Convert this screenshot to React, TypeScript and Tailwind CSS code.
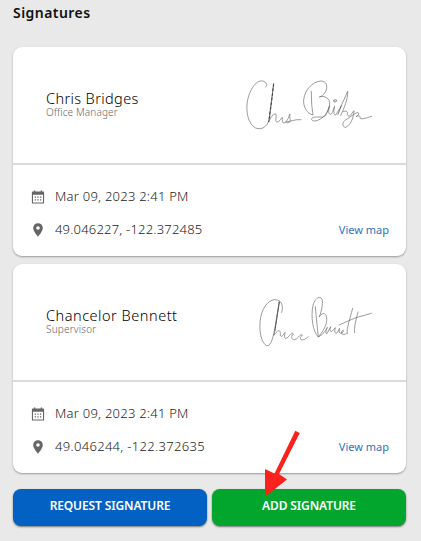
import type { ReactNode } from "react";

type Signature = {
  name: string;
  nameClass: string;
  role: string;
  roleClass: string;
  date: string;
  location: string;
  locationClass: string;
  drawing: ReactNode;
};

const signatures: Signature[] = [
  {
    name: "Chris Bridges",
    nameClass: "tracking-[0.38px]",
    role: "Office Manager",
    roleClass: "tracking-[0.13px]",
    date: "Mar 09, 2023 2:41 PM",
    location: "49.046227, -122.372485",
    locationClass: "tracking-[0.2px]",
    drawing: (
      <svg className="h-[116px] w-[140px]" viewBox="30 -39 420 348" fill="none" stroke="#6a6a6a" strokeWidth="2" strokeLinecap="round" strokeLinejoin="round">
        <path d="M107 81C114 77 110 66 98 63C77 59 55 95 51 132C48 171 62 203 84 206C103 208 115 193 119 174L131 71L116 186C121 174 131 159 137 162C141 166 134 184 140 186C148 187 153 176 157 172C157 180 156 189 162 189C170 187 175 174 180 162C177 173 183 178 180 185C176 190 169 189 167 186C181 185 195 177 213 179" />
        <path d="M131 71L125 122L116 186" stroke="#333" strokeWidth="2.5" strokeDasharray="9 5" strokeLinecap="butt" />
        <path d="M244 94L245 133L249 165C231 161 219 140 221 119C225 88 248 65 273 63C290 63 294 80 287 94C282 104 273 111 268 111C283 105 301 116 299 132C298 155 277 181 254 183C243 183 242 175 250 172C267 168 285 178 290 160L299 137C295 151 295 163 301 163C308 162 309 149 314 139C311 152 310 164 317 165L332 141L353 94C354 116 343 143 332 167M340 155C347 151 354 154 352 161C352 171 360 170 364 162L372 152C371 176 359 199 346 202C335 201 337 185 348 179C362 171 371 161 381 158C390 157 386 166 378 170C386 165 391 167 390 173C391 180 406 175 425 169" />
        <path d="M311 122C315 117 323 119 319 124C316 127 310 126 311 122M334 137L324 163" stroke="#444" />
      </svg>
    ),
  },
  {
    name: "Chancelor Bennett",
    nameClass: "tracking-[0.52px]",
    role: "Supervisor",
    roleClass: "tracking-[0.2px]",
    date: "Mar 09, 2023 2:41 PM",
    location: "49.046244, -122.372635",
    locationClass: "tracking-[0.31px]",
    drawing: (
      <svg className="h-[116px] w-[140px]" viewBox="30 -48 420 348" fill="none" stroke="#6a6a6a" strokeWidth="2" strokeLinecap="round" strokeLinejoin="round">
        <path d="M155 97C160 83 157 65 143 60C121 54 99 76 92 112C85 151 94 190 110 197C124 199 130 169 136 137L148 65L132 166C137 157 147 148 150 154C152 161 149 170 155 169C159 168 162 160 165 157C163 168 163 176 168 175C176 173 179 162 187 160C192 160 190 165 187 165C182 171 187 181 194 179C203 177 208 166 213 164C220 164 216 168 211 172C209 184 224 181 235 170" />
        <path d="M148 65L143 98L135 152" stroke="#444" strokeWidth="2" strokeDasharray="9 3" />
        <path d="M256 80L260 123L265 171C248 155 242 109 249 76C254 57 268 45 276 57C280 73 273 97 268 111C274 97 288 97 290 113C293 135 276 158 265 171C278 164 287 154 292 142C287 154 286 162 291 161L302 140C298 153 301 157 307 153L316 143C313 155 314 162 321 159L329 145C325 156 329 164 338 157C343 150 339 148 335 155C332 168 346 162 353 160C347 158 358 121 368 85M384 96C379 117 371 142 374 158M327 135L375 114L424 100" />
      </svg>
    ),
  },
];

function CalendarIcon() {
  return (
    <svg className="h-4 w-4 shrink-0" viewBox="-0.5 0 16 16" fill="#666">
      <path fillRule="evenodd" d="M3.400 1.400h1.400v1.200h5.400V1.400h1.400v1.200h1c.6 0 1 .4 1 1v10.100c0 .5-.4.900-.9.900H2.300c-.5 0-.9-.4-.9-.9V3.600c0-.6.4-1 1-1h1V1.400ZM2.500 5.700v7.800h10V5.700h-10Z" />
      <path d="M4.200 7.600h1.300v1.200H4.200zm2.600 0h1.300v1.200H6.800zm2.700 0h1.300v1.200H9.500zM4.200 10.300h1.300v1.200H4.200zm2.600 0h1.300v1.200H6.800zm2.700 0h1.300v1.200H9.500z" />
    </svg>
  );
}

function PinIcon() {
  return (
    <svg className="h-4 w-4 shrink-0" viewBox="0 0 16 16" fill="#666">
      <path fillRule="evenodd" d="M8 1.200A4.800 4.800 0 0 0 3.200 6c0 3.500 4.800 8.700 4.800 8.700S12.800 9.500 12.800 6A4.800 4.800 0 0 0 8 1.200Zm0 3a1.800 1.800 0 1 1 0 3.600 1.800 1.800 0 0 1 0-3.600Z" />
    </svg>
  );
}

function SignatureCard({ item }: { item: Signature }) {
  return (
    <section className="h-[208.5px] rounded-[9px] bg-white shadow-[0_1px_2px_rgba(0,0,0,0.35)]">
      <div className="flex h-[116px] justify-between pr-[26px] pl-[33px]">
        <div className="pt-[42px] whitespace-nowrap">
          <h2 className={`text-[14.5px] leading-[19px] font-light text-black ${item.nameClass}`}>{item.name}</h2>
          <p className={`text-[10px] leading-[9px] font-light text-[#666] ${item.roleClass}`}>{item.role}</p>
        </div>
        {item.drawing}
      </div>
      <div className="border-t-2 border-[#dadada] pt-[22px] pr-[17px] pl-[17px] text-[13px] font-light text-[#222]">
        <div className="flex h-5 items-center gap-[9px]">
          <CalendarIcon />
          <span className="tracking-[0.24px]">{item.date}</span>
        </div>
        <div className="mt-[13px] flex h-5 items-center gap-[9px]">
          <PinIcon />
          <span className={item.locationClass}>{item.location}</span>
          <a href="#map" className="ml-auto text-[11px] font-normal text-[#2d72bf]">View map</a>
        </div>
      </div>
    </section>
  );
}

export default function App() {
  return (
    <main className="relative h-[541px] w-[421px] overflow-hidden bg-[#e9e9e9] pr-[15px] pl-[13px] font-['Noto_Sans',sans-serif]">
      <h1 className="h-[47px] pt-[3px] text-[14px] leading-5 font-semibold tracking-[0.45px] text-[#111]">Signatures</h1>

      <div className="flex flex-col gap-[8.5px]">
        {signatures.map((item) => (
          <SignatureCard key={item.name} item={item} />
        ))}
      </div>

      <div className="mt-4 grid grid-cols-2 gap-[5px] text-[12px] font-semibold tracking-[-0.12px] text-white">
        <button className="h-[37px] rounded-[8px] bg-[#0361c3] pb-0.5 shadow-[0_1px_2px_rgba(0,0,0,0.5)]">REQUEST SIGNATURE</button>
        <button className="h-[37px] rounded-[8px] bg-[#03a62c] pb-0.5 shadow-[0_1px_2px_rgba(0,0,0,0.5)]">ADD SIGNATURE</button>
      </div>

      {/* Arrow pointing at the add button */}
      <svg className="pointer-events-none absolute top-[428px] left-[262px] h-[72px] w-[42px]" viewBox="0 0 42 72" fill="#fb221d">
        <path d="M33.300 2.700 37.800 5 17 46 25 51.500 3 68.800V41l9.500 4.500Z" />
      </svg>
    </main>
  );
}
